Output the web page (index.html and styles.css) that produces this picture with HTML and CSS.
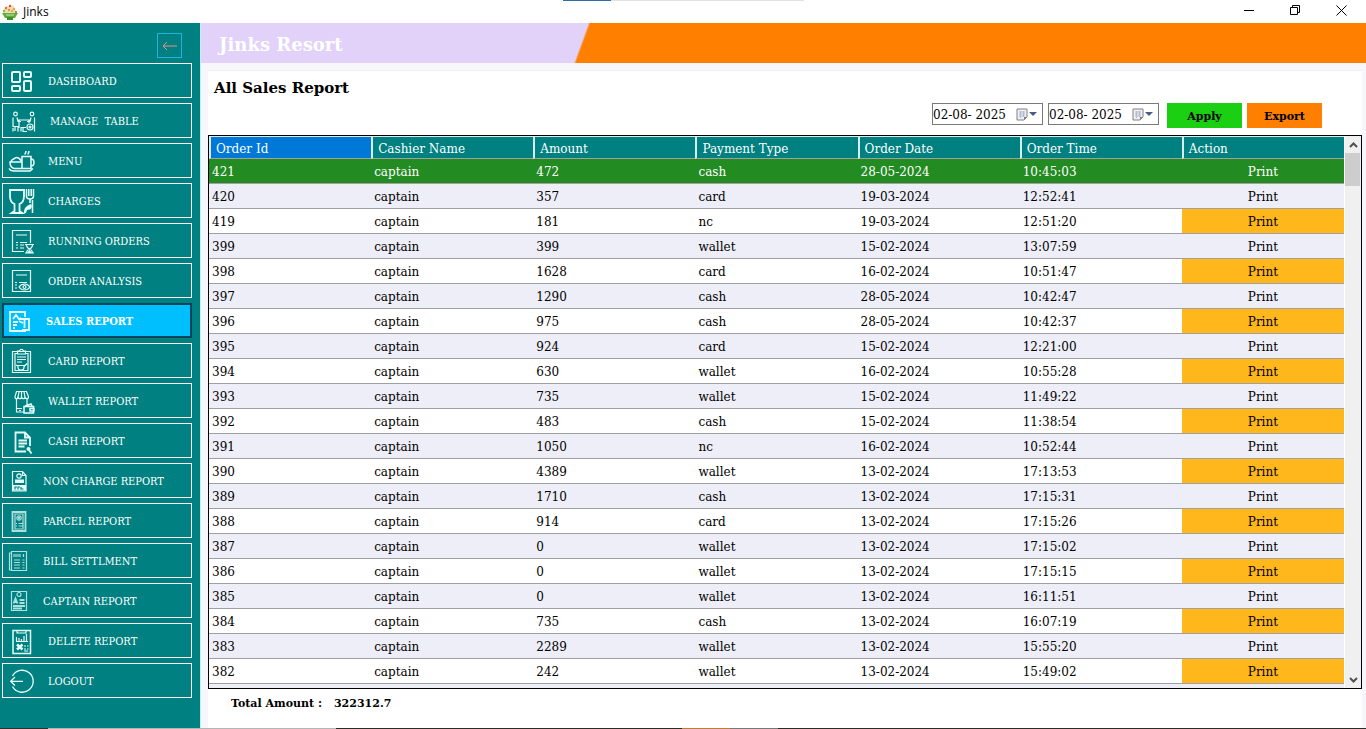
FILE: index.html
```html
<!DOCTYPE html>
<html lang="en">
<head>
    <meta charset="UTF-8">
    <meta name="viewport" content="width=device-width, initial-scale=1.0">
    <title>Jinks</title>
    <link rel="stylesheet" href="styles.css">
</head>
<body>
<header class="titlebar">
    <svg class="app-icon" viewBox="0 0 16 16">
        <path d="M1 9l1-4 3-3 3 1 3-2 2 4 2 4z" fill="#f3dcae"/>
        <path d="M0 9h16l-3 5H3z" fill="#5fae3c"/>
        <path d="M5 13h6v3H5z" fill="#3f8f2c"/>
        <circle cx="4" cy="4" r="1.2" fill="#e8703a"/>
        <circle cx="8" cy="2" r="1.2" fill="#d94a3a"/>
        <circle cx="12" cy="5" r="1.2" fill="#e9a33a"/>
        <circle cx="7" cy="6" r="1.2" fill="#e58a6a"/>
        <circle cx="10" cy="7" r="1" fill="#7cc04a"/>
        <circle cx="2" cy="7" r="1.2" fill="#7cc04a"/>
        <circle cx="14" cy="8" r="1" fill="#d94a3a"/>
        <path d="M4 11h8" stroke="#c8e6a8"/>
    </svg>
    <span class="app-name">Jinks</span>
    <div class="tab-line"></div>
    <div class="window-buttons">
        <button aria-label="Minimize"><svg viewBox="0 0 11 11"><path d="M0 5.5h10"/></svg></button>
        <button aria-label="Restore"><svg viewBox="0 0 11 11"><path d="M.5 2.5h7v7h-7zM2.5 2.5v-2h7v7h-2"/></svg></button>
        <button aria-label="Close"><svg viewBox="0 0 11 11"><path d="M.5.5l10 10M10.5.5l-10 10"/></svg></button>
    </div>
</header>

<div class="layout">
    <nav class="sidebar">
        <button class="collapse" aria-label="Collapse menu">
            <svg viewBox="0 0 16 10"><path d="M15 5H1M5 1L1 5l4 4"/></svg>
        </button>
        <a href="#">
            <svg viewBox="0 0 25 25"><g stroke-width="2"><rect x="2" y="4" width="8" height="10" rx="1"/><rect x="14" y="4" width="7" height="5" rx="1"/><rect x="2" y="18" width="8" height="5" rx="1"/><rect x="14" y="13" width="7" height="10" rx="1"/></g></svg>
            DASHBOARD
        </a>
        <a href="#" class="wide">
            <svg viewBox="0 0 25 25"><circle cx="5.5" cy="6" r="1.8"/><circle cx="22" cy="6" r="1.8"/><path d="M8 12h12M9 12v8M19 12v3M3 9.5v9h5v5M3 20v3.5M7 9.500l1 4h3M24.5 9.500v14M21 9.5l-1 4h-3M5 18v5M11 23.5v-4h5M13 20v3.500h4"/><circle cx="20" cy="19" r="3"/><circle cx="20" cy="19" r="1"/></svg>
            MANAGE&nbsp; TABLE
        </a>
        <a href="#">
            <svg viewBox="0 0 25 25"><path stroke-width="1.5" d="M12 8.500h9v12h-9zM21 11c4 0 4 7 0 7M12 14H0c0 4 2 6 4 6.5h8M-1 20.500c1 2 3 2.500 5 2.500h16l3-2.500M1 13.500c1-3 3-2 4-3.500 2-1 5 0 6 3M15 6.500c0-2 1-1 1-3.500M18 6.500c0-2 1-1 1-3.500"/></svg>
            MENU
        </a>
        <a href="#">
            <svg viewBox="0 0 25 25"><path stroke-width="1.8" d="M0 2h14v6c0 5-2 7-4.500 8v7l3 2h-11l3-2v-7C2 15 0 13 0 8z"/><path stroke-width="1.5" d="M16.500 1v7c0 2 1 3 3.500 3s3.500-1 3.500-3V1M18.800 1v7M21.200 1v7M20 11v4M22.500 12v13"/><path class="solid" d="M14 25c0-5 2-7 7-9 2 3 0 6-4 6l-1 3z"/></svg>
            CHARGES
        </a>
        <a href="#">
            <svg viewBox="0 0 25 25"><path d="M14 23.500H2.500v-21h18V15M6 7h11M6 14.500h2M10 14.500h7M6 17h2M10 17h4M6 20h2M10 20h4M15 16.500h9M15 25h9M16.500 17c0 5 6 3 6 8M22.500 17c0 5-6 3-6 8"/><path class="solid" d="M17 25l2.500-3 2.500 3z"/></svg>
            RUNNING ORDERS
        </a>
        <a href="#">
            <svg viewBox="0 0 25 25"><path d="M2.500 2.500h18v21h-18zM6 7h11M5 14.500h2M9 14.500h8M5 17h2M5 20h2"/><path d="M9 19c3-4 8-4 11 0-3 4-8 4-11 0z"/><circle cx="14.5" cy="19" r="1.5"/></svg>
            ORDER ANALYSIS
        </a>
        <a href="#" class="active">
            <svg viewBox="0 0 25 25"><path stroke-width="1.8" d="M15 9V4H0v19h10M3 11l3-4 3 4 2-1M3 14h5M3 17h4M3 20h2M10 11h9v11h-7M14.500 11v9M9 13l4 2M9 23h7"/></svg>
            SALES REPORT
        </a>
        <a href="#">
            <svg viewBox="0 0 25 25"><path d="M2.500 3.500h18v21h-18z"/><path d="M7 5.500H5v17h13v-17h-2M7.500 3h2l1-1.500h2l1 1.500h2v3h-8zM7 9h9M7 11.500h9M7 14h5M8 17.500h6v2c0 2-1 2.500-3 2.500s-3-1-3-2.500zM14 18.500l3-3M8 18l-2-1"/></svg>
            CARD REPORT
        </a>
        <a href="#">
            <svg viewBox="0 0 25 25"><path d="M6.500 3.500h10l2 5c0 3-3 3-3.500 0 0 3-3 3-3.500 0 0 3-3 3-3.500 0 0 3-3 3-3 0zM9 4L8 9M11.500 4v5M14 4l1 5M6.500 11v13h7M17 11v6M7 20.500h5M9 22.500h2"/><path stroke-width="1.5" d="M14 18.500h9.500V25H14zM15 18l6-2 1 2M20 20.500h4v2.500h-4z"/></svg>
            WALLET REPORT
        </a>
        <a href="#">
            <svg viewBox="0 0 25 25"><path stroke-width="1.8" d="M16 23.500H5.500v-19H15l5 5V18M15 4.500v5h5M8.500 12.500H17M8.500 15.500H17M8.500 18.500h6"/><circle class="solid" cx="18.5" cy="21" r="2"/><path stroke-width="1.8" d="M19 22l2.500 3.500"/></svg>
            CASH REPORT
        </a>
        <a href="#" class="small">
            <svg viewBox="0 0 25 25"><path d="M2.500 3.500h10l3.500 4v15.500H2.500zM12.500 3.500v4H16"/><circle cx="9" cy="8" r="2.200"/><path class="solid" d="M5 11.500h9v3.500H5zM2.500 17H16v5.500H2.500z"/><path class="cut" d="M5 21.500v-2.500h2M8 21.500v-2.500h2M11 19v2h2.500"/></svg>
            NON CHARGE REPORT
        </a>
        <a href="#" class="small">
            <svg class="faint" viewBox="0 0 25 25"><path stroke-width="1.8" d="M2.500 4h13v19h-13z"/><path d="M5 6h8v15H5zM7 4.500h4M6 15.500h1M8.500 15.500H13M6 18h1M8.500 18H13"/><circle cx="9" cy="10" r="2.200"/><circle cx="9" cy="10" r=".7"/></svg>
            PARCEL REPORT
        </a>
        <a href="#" class="small">
            <svg class="faint" viewBox="0 0 25 25"><path d="M1.500 3.500h15v19h-15zM1.500 5H-.5v17h2M4 6v3M6 6v3M8 6v3M10 9V6M13.500 6v3M4 12h6M12.500 12h2M4 14.500h6M12.500 14.500h2M4 17h6M12.500 17h2M4 20h6M12.500 20h2"/></svg>
            BILL SETTLMENT
        </a>
        <a href="#" class="small">
            <svg class="faint" viewBox="0 0 25 25"><path d="M1.500 3.500h15v19h-15z"/><circle cx="9" cy="6.500" r="2"/><path stroke-width="1.8" d="M3.500 15.500l2-5 2 5M4 14h3M9.500 12h5M9.500 15h5M3 18h12M3 20.500h9"/></svg>
            CAPTAIN REPORT
        </a>
        <a href="#">
            <svg viewBox="0 0 25 25"><path stroke-width="1.5" d="M3 2.500h17.500v23H3z"/><path d="M7 2v3h9V2M6 13.500h12M6.500 13V9M9 13v-3M11.500 13v-2M14 13V8M16.500 13V6M14 18h2M17 18h1.500M14 21h2M17 21h1.500M14 23h4"/><path stroke-width="2.5" d="M7 16.500l5.500 5M12.500 16.500l-5.500 5"/></svg>
            DELETE REPORT
        </a>
        <a href="#">
            <svg viewBox="0 0 25 25"><path stroke-width="1.3" d="M2.500 8a11 11 0 1 1 0 10.500M13 13.300H.7M5 9l-4.300 4.300L5 17.500"/></svg>
            LOGOUT
        </a>
    </nav>

    <main class="content">
        <div class="banner">
            <h1>Jinks Resort</h1>
        </div>
        <section class="panel">
            <h2>All Sales Report</h2>
            <div class="filters">
                <div class="date-box">
                    <input type="text" value="02-08- 2025" aria-label="From date">
                    <button aria-label="Open from calendar">
                        <svg viewBox="0 0 22 13"><path d="M1 1h10v8l-3 3H1z" fill="#eef0f6" stroke="#857f7c"/><path d="M3 4h6M3 6h6M3 8h6M4.500 3v7M7.500 3v6" stroke="#b3bccd" fill="none"/><path d="M8 12V9h3z" fill="#857f7c"/><path d="M13 4h8l-4 4z" fill="#4a5c85"/></svg>
                    </button>
                </div>
                <div class="date-box">
                    <input type="text" value="02-08- 2025" aria-label="To date">
                    <button aria-label="Open to calendar">
                        <svg viewBox="0 0 22 13"><path d="M1 1h10v8l-3 3H1z" fill="#eef0f6" stroke="#857f7c"/><path d="M3 4h6M3 6h6M3 8h6M4.500 3v7M7.500 3v6" stroke="#b3bccd" fill="none"/><path d="M8 12V9h3z" fill="#857f7c"/><path d="M13 4h8l-4 4z" fill="#4a5c85"/></svg>
                    </button>
                </div>
                <button class="apply-button">Apply</button>
                <button class="export-button">Export</button>
            </div>
            <div class="grid">
                <div class="table-wrap" id="salesTable"></div>
                <div class="scrollbar">
                    <button aria-label="Scroll up"><svg viewBox="0 0 9 6"><path d="M1 5l3.500-3.500L8 5"/></svg></button>
                    <div class="thumb"></div>
                    <button aria-label="Scroll down"><svg viewBox="0 0 9 6"><path d="M1 1l3.500 3.500L8 1"/></svg></button>
                </div>
            </div>
            <p class="total"><span>Total Amount :</span><span>322312.7</span></p>
        </section>
    </main>
</div>
<div class="taskbar"></div>

<script>
    // id, amount, payment type, date, time
    const orders = [
        [421, 472, 'cash', '28-05-2024', '10:45:03'],
        [420, 357, 'card', '19-03-2024', '12:52:41'],
        [419, 181, 'nc', '19-03-2024', '12:51:20'],
        [399, 399, 'wallet', '15-02-2024', '13:07:59'],
        [398, 1628, 'card', '16-02-2024', '10:51:47'],
        [397, 1290, 'cash', '28-05-2024', '10:42:47'],
        [396, 975, 'cash', '28-05-2024', '10:42:37'],
        [395, 924, 'card', '15-02-2024', '12:21:00'],
        [394, 630, 'wallet', '16-02-2024', '10:55:28'],
        [393, 735, 'wallet', '15-02-2024', '11:49:22'],
        [392, 483, 'cash', '15-02-2024', '11:38:54'],
        [391, 1050, 'nc', '16-02-2024', '10:52:44'],
        [390, 4389, 'wallet', '13-02-2024', '17:13:53'],
        [389, 1710, 'cash', '13-02-2024', '17:15:31'],
        [388, 914, 'card', '13-02-2024', '17:15:26'],
        [387, 0, 'wallet', '13-02-2024', '17:15:02'],
        [386, 0, 'wallet', '13-02-2024', '17:15:15'],
        [385, 0, 'wallet', '13-02-2024', '16:11:51'],
        [384, 735, 'cash', '13-02-2024', '16:07:19'],
        [383, 2289, 'wallet', '13-02-2024', '15:55:20'],
        [382, 242, 'wallet', '13-02-2024', '15:49:02']
    ];

    function createTable(data) {
        let table = '<table><thead><tr><th class="sorted">Order Id</th><th>Cashier Name</th><th>Amount</th><th>Payment Type</th><th>Order Date</th><th>Order Time</th><th>Action</th></tr></thead><tbody>';
        data.forEach(([id, amount, type, date, time], i) => {
            table += `<tr${i === 0 ? ' class="selected"' : ''}>
                        <td>${id}</td>
                        <td>captain</td>
                        <td>${amount}</td>
                        <td>${type}</td>
                        <td>${date}</td>
                        <td>${time}</td>
                        <td class="action"><button>Print</button></td>
                      </tr>`;
        });
        table += '</tbody></table>';
        return table;
    }

    document.getElementById('salesTable').innerHTML = createTable(orders);
</script>
</body>
</html>
```
FILE: styles.css
```css
* {
    box-sizing: border-box;
}
body {
    font-family: "DejaVu Serif", serif;
    font-size: 12px;
    margin: 0;
    color: #000;
    background-color: #fff;
    height: 100vh;
    display: flex;
    flex-direction: column;
    overflow: hidden;
}
button, input {
    font-family: inherit;
    font-size: inherit;
    color: inherit;
    background: none;
    border: none;
    padding: 0;
    margin: 0;
}
button {
    cursor: pointer;
}

/* window title bar */
.titlebar {
    display: flex;
    align-items: center;
    flex: none;
    height: 23px;
    padding-left: 2px;
    position: relative;
    font-family: "Open Sans", sans-serif;
}
.app-icon {
    width: 16px;
    height: 16px;
    margin-right: 5px;
}
.tab-line {
    position: absolute;
    top: 0;
    left: 563px;
    width: 241px;
    height: 1px;
    background: linear-gradient(to right, #2f6da5 48px, #e2e2e2 48px);
}
.window-buttons {
    display: flex;
    margin-left: auto;
    padding-right: 1px;
    padding-bottom: 3px;
}
.window-buttons button {
    display: flex;
    justify-content: center;
    width: 46px;
    padding-right: 2px;
}
.window-buttons svg {
    width: 11px;
    height: 11px;
    fill: none;
    stroke: #000;
}

.layout {
    display: flex;
    flex: 1;
    min-height: 0;
}

/* sidebar */
.sidebar {
    display: flex;
    flex-direction: column;
    gap: 5px;
    flex: none;
    width: 200px;
    padding: 10px 8px 0 2px;
    background-color: #008080;
}
.collapse {
    display: flex;
    align-items: center;
    justify-content: center;
    align-self: flex-end;
    width: 25px;
    height: 25px;
    margin-right: 10px;
    border: 1px solid #1fb2e0;
}
.collapse svg {
    width: 16px;
    height: 10px;
    fill: none;
    stroke: #f08c8c;
}
.sidebar a {
    display: flex;
    align-items: center;
    gap: 13px;
    height: 35px;
    padding-top: 2px;
    padding-left: 7px;
    border: 1px solid #fff;
    color: #fff;
    font-family: "DejaVu Serif Condensed", "DejaVu Serif", serif;
    font-size: 11px;
    text-decoration: none;
}
.sidebar a svg {
    flex: none;
    width: 25px;
    height: 25px;
    margin-bottom: 2px;
    overflow: visible;
    fill: none;
    stroke: #e6ffff;
    stroke-width: 1.2;
}
.sidebar a .solid {
    fill: #e6ffff;
    stroke: none;
}
.sidebar a .cut {
    stroke: #008080;
}
.sidebar a .faint {
    opacity: 0.75;
}
.sidebar .wide {
    gap: 15px;
}
.sidebar .small {
    gap: 8px;
}
.sidebar .active {
    gap: 11px;
    padding-left: 6px;
    border: 2px solid #06445a;
    background-color: #00bfff;
    font-weight: bold;
}

/* main area */
.content {
    display: flex;
    flex-direction: column;
    flex: 1;
    min-width: 0;
    border-left: 1px solid #c4eef2;
    background-color: #f6f6fb;
}
.banner {
    flex: none;
    height: 40px;
    background: linear-gradient(110deg, #e2d1f9 364px, #ff8000 366px);
}
.banner h1 {
    margin: 0;
    padding-left: 18px;
    color: #fff;
    font-size: 18px;
    line-height: 44px;
}
.panel {
    display: flex;
    flex-direction: column;
    flex: 1;
    min-height: 0;
    margin: 7px 4px 0 7px;
    border-top: 1px solid #ededf3;
    background-color: #fff;
}
.panel h2 {
    margin: 0;
    padding: 6px 0 4px 6px;
    font-size: 15px;
    line-height: 22px;
}
.filters {
    display: flex;
    justify-content: flex-end;
    gap: 5px;
    padding-right: 40px;
    margin-bottom: 7px;
}
.date-box {
    display: flex;
    align-items: center;
    width: 111px;
    height: 22px;
    padding-right: 4px;
    border: 1px solid #7a7a7a;
}
.date-box input {
    flex: 1;
    min-width: 0;
    padding-top: 2px;
}
.date-box svg {
    display: block;
    width: 22px;
    height: 13px;
}
.apply-button, .export-button {
    width: 75px;
    height: 25px;
    padding-top: 1px;
    font-size: 11px;
    font-weight: bold;
}
.apply-button {
    margin-left: 3px;
    background-color: #1bcf12;
}
.export-button {
    background-color: #ff8000;
}

/* sales grid */
.grid {
    display: flex;
    flex: 1;
    min-height: 0;
    border: 1px solid #000;
    background-color: #eeeef8;
}
.table-wrap {
    flex: 1;
    overflow: hidden;
}
table {
    width: 100%;
    table-layout: fixed;
    border-collapse: separate;
    border-spacing: 0;
}
th, td {
    padding: 2px 0 0 3px;
    text-align: left;
    font-weight: normal;
    white-space: nowrap;
}
th {
    height: 23px;
    padding-left: 5px;
    border-left: 2px solid #d8eeee;
    border-top: 1px solid #d8eeee;
    border-bottom: 1px solid #a0a0a0;
    background-color: #008080;
    color: #fff;
}
th.sorted {
    background-color: #0078d7;
}
td {
    height: 25px;
    border-bottom: 1px solid #a0a0a0;
    background-color: #fff;
}
tr:nth-child(even) td {
    background-color: #eeeef8;
}
tr:nth-child(odd) .action {
    background-color: #ffb71c;
}
tbody .selected td, tbody .selected .action {
    background-color: #228b22;
    color: #fff;
}
.action {
    padding-left: 0;
    text-align: center;
}
.scrollbar {
    display: flex;
    flex-direction: column;
    flex: none;
    width: 17px;
    border-left: 1px solid #fff;
    background-color: #f0f0f0;
}
.scrollbar button {
    display: flex;
    align-items: center;
    justify-content: center;
    height: 17px;
}
.scrollbar button:last-child {
    margin-top: auto;
}
.scrollbar svg {
    width: 9px;
    height: 6px;
    fill: none;
    stroke: #505050;
    stroke-width: 2;
}
.thumb {
    height: 33px;
    margin-right: 1px;
    background-color: #cdcdcd;
}
.total {
    display: flex;
    gap: 12px;
    margin: 0;
    padding: 5px 0 14px 23px;
    font-size: 11px;
    font-weight: bold;
    line-height: 20px;
}
.taskbar {
    flex: none;
    height: 1px;
    background: linear-gradient(to right, #2e2e2e 48px, #b5b5b5 48px, #b5b5b5 336px, #2e2a26 336px, #2e2a26 682px, #c07a3a 682px, #c07a3a 730px, #777 730px, #777 778px, #2e2a26 778px);
}
```
